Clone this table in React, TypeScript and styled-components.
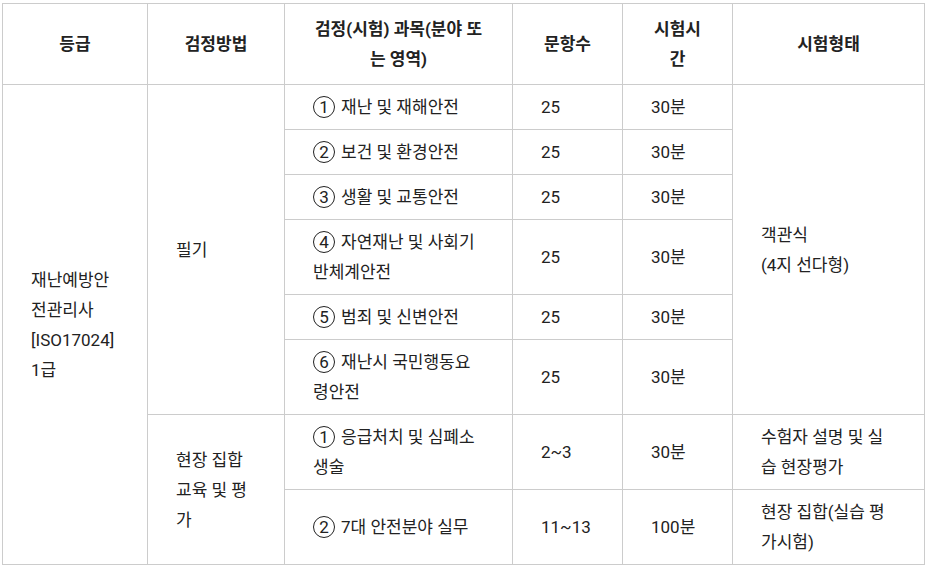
import React from "react";
import styled, { createGlobalStyle } from "styled-components";

const Global = createGlobalStyle`
  html, body { margin: 0; padding: 0; background: #fff; }
  body {
    font-family: Roboto, "Noto Sans CJK KR", "Noto Sans", sans-serif;
    color: #222;
  }
`;

const Page = styled.div`
  padding: 3px 0 0 2px;
`;

const Table = styled.table`
  border-collapse: collapse;
  table-layout: fixed;
  width: 923px;
  font-size: 17px;
  line-height: 30px;
`;

const Th = styled.th`
  border: 1px solid #ccc;
  padding: 10px 24px;
  font-weight: 700;
  text-align: center;
  vertical-align: middle;
`;

const Td = styled.td`
  border: 1px solid #ccc;
  padding: 7px 29px 7px 28px;
  text-align: left;
  vertical-align: middle;
`;

const Circle = styled.span`
  display: inline-flex;
  align-items: center;
  justify-content: center;
  box-sizing: border-box;
  width: 22px;
  height: 22px;
  margin: 4px 6px 0 0;
  border: 1.5px solid #222;
  border-radius: 50%;
  font-size: 17px;
  line-height: 1;
  vertical-align: top;
`;

type Subject = { n: number; name: string; count: string; time: string };

const written: Subject[] = [
  { n: 1, name: "재난 및 재해안전", count: "25", time: "30분" },
  { n: 2, name: "보건 및 환경안전", count: "25", time: "30분" },
  { n: 3, name: "생활 및 교통안전", count: "25", time: "30분" },
  { n: 4, name: "자연재난 및 사회기반체계안전", count: "25", time: "30분" },
  { n: 5, name: "범죄 및 신변안전", count: "25", time: "30분" },
  { n: 6, name: "재난시 국민행동요령안전", count: "25", time: "30분" },
];

const practical: (Subject & { form: string })[] = [
  { n: 1, name: "응급처치 및 심폐소생술", count: "2~3", time: "30분", form: "수험자 설명 및 실습 현장평가" },
  { n: 2, name: "7대 안전분야 실무", count: "11~13", time: "100분", form: "현장 집합(실습 평가시험)" },
];

const SubjectCell = ({ n, name }: { n: number; name: string }) => (
  <Td>
    <Circle>{n}</Circle>
    {name}
  </Td>
);

export default function App() {
  return (
    <Page>
      <Global />
      <Table>
        <colgroup>
          <col style={{ width: 145 }} />
          <col style={{ width: 137 }} />
          <col style={{ width: 228 }} />
          <col style={{ width: 110 }} />
          <col style={{ width: 110 }} />
          <col style={{ width: 192 }} />
        </colgroup>
        <thead>
          <tr>
            <Th>등급</Th>
            <Th>검정방법</Th>
            <Th>검정(시험) 과목(분야 또는 영역)</Th>
            <Th>문항수</Th>
            <Th>시험시간</Th>
            <Th>시험형태</Th>
          </tr>
        </thead>
        <tbody>
          {written.map((s, i) => (
            <tr key={`w${s.n}`}>
              {i === 0 && <Td rowSpan={8}>재난예방안전관리사 [ISO17024] 1급</Td>}
              {i === 0 && <Td rowSpan={6}>필기</Td>}
              <SubjectCell n={s.n} name={s.name} />
              <Td>{s.count}</Td>
              <Td>{s.time}</Td>
              {i === 0 && (
                <Td rowSpan={6}>
                  객관식
                  <br />
                  (4지 선다형)
                </Td>
              )}
            </tr>
          ))}
          {practical.map((s, i) => (
            <tr key={`p${s.n}`}>
              {i === 0 && <Td rowSpan={2}>현장 집합 교육 및 평가</Td>}
              <SubjectCell n={s.n} name={s.name} />
              <Td>{s.count}</Td>
              <Td>{s.time}</Td>
              <Td>{s.form}</Td>
            </tr>
          ))}
        </tbody>
      </Table>
    </Page>
  );
}
